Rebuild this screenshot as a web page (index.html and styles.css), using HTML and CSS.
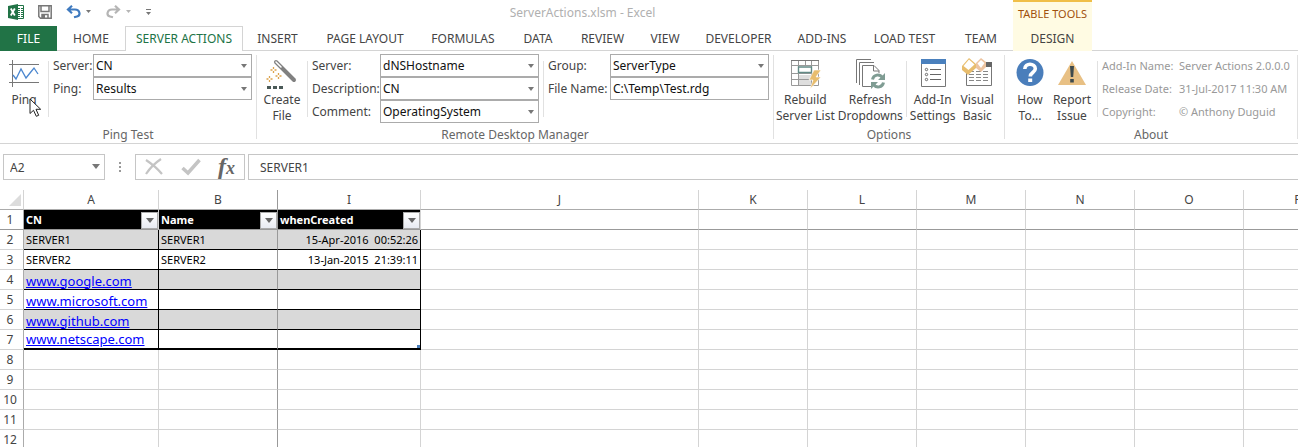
FILE: index.html
```html
<!DOCTYPE html>
<html lang="en">
<head>
<meta charset="utf-8">
<title>ServerActions.xlsm - Excel</title>
<link rel="stylesheet" href="styles.css">
</head>
<body>
<header class="titlebar">
  <div class="quick">
    <svg class="logo" width="17" height="16" viewBox="0 0 17 16" aria-hidden="true"><path fill="#fff" stroke="#217346" d="M9 1.500h6.500v13H9z"/><path stroke="#217346" d="M10 4.500h2m1 0h2M10 6.500h2m1 0h2M10 8.500h2m1 0h2M10 10.500h2m1 0h2M10 12.500h2m1 0h2"/><path fill="#217346" d="M0 2l10-2v16L0 14z"/><path stroke="#fff" stroke-width="1.800" d="M2.800 4.500l4 7M6.800 4.500l-4 7"/></svg>
    <button class="tool save" aria-label="Save"><svg width="14" height="14" viewBox="0 0 14 14"><path fill="none" stroke="#777" stroke-width="1.500" d="M.8.8h12.400v12.400H2.500L.8 11.500zM3 1v5.500h8V1M4 13V9.500h6V13"/><path fill="#777" d="M4 10h3v3H4z"/></svg></button>
    <button class="tool undo" aria-label="Undo"><svg width="26" height="14" viewBox="0 0 26 14"><path fill="none" stroke="#3f7abf" stroke-width="2.200" d="M6 .8L2 4.500l4 3.700M2 4.500h7c5 0 6 6 2 7l-3 .8"/><path fill="#777" d="M20 5h5l-2.500 3z"/></svg></button>
    <button class="tool redo" aria-label="Redo"><svg width="26" height="14" viewBox="0 0 26 14"><path fill="none" stroke="#b5b5b5" stroke-width="2.200" d="M9 .8l4 3.700-4 3.700M13 4.500H6c-5 0-6 6-2 7l3 .8"/><path fill="#b5b5b5" d="M20 5h5l-2.500 3z"/></svg></button>
    <button class="tool" aria-label="Customize toolbar"><svg width="6" height="8" viewBox="0 0 6 8"><path fill="#777" d="M0 1h5v1H0zM0 4h5L2.500 7z"/></svg></button>
  </div>
  <h1 class="title">ServerActions.xlsm - Excel</h1>
  <div class="context">TABLE TOOLS</div>
</header>

<nav class="tabs">
  <button class="tab file">FILE</button>
  <button class="tab">HOME</button>
  <button class="tab active">SERVER ACTIONS</button>
  <button class="tab">INSERT</button>
  <button class="tab">PAGE LAYOUT</button>
  <button class="tab">FORMULAS</button>
  <button class="tab">DATA</button>
  <button class="tab">REVIEW</button>
  <button class="tab">VIEW</button>
  <button class="tab">DEVELOPER</button>
  <button class="tab">ADD-INS</button>
  <button class="tab">LOAD TEST</button>
  <button class="tab">TEAM</button>
  <button class="tab design">DESIGN</button>
</nav>

<main>
<section class="ribbon">
  <div class="group ping">
    <div class="items">
      <button class="big ping-button">
        <svg width="32" height="32" viewBox="0 0 32 32"><path fill="none" stroke="#777" d="M1 6.500h30M1 24.500h30M4.500 2v27"/><path fill="none" stroke="#4a86cf" stroke-width="1.300" d="M5 17l3 4 5-10 5 9 4-5 4-5 4 6"/></svg>
        <span>Ping</span>
        <svg class="cursor" width="13" height="20" viewBox="0 0 13 20"><path fill="#fff" stroke="#222" d="M1 1v14.500l3.500-3.200 2.800 6 2.400-1-2.700-6h4.700z"/></svg>
      </button>
      <div class="rule"></div>
      <div class="fields">
        <label for="s1">Server:</label><span class="combo"><select id="s1"><option>CN</option></select></span>
        <label for="p1">Ping:</label><span class="combo"><select id="p1"><option>Results</option></select></span>
      </div>
    </div>
    <div class="caption">Ping Test</div>
  </div>

  <div class="group remote">
    <div class="items">
      <button class="big">
        <svg width="32" height="32" viewBox="0 0 32 32"><path stroke="#808080" stroke-width="4" stroke-linecap="round" d="M10 4l18 18"/><path stroke="#fff" stroke-width="1.500" stroke-linecap="round" d="M10 4l5 5"/><path fill="none" stroke="#dca24c" stroke-width="1.300" d="M7.500 9v2m0 2v2M4.500 12h2m2 0h2M12.500 15v2m0 2v2M9.500 18h2m2 0h2M3.500 18v2m0 2v2M.5 21h2m2 0h2"/><path fill="#4a5a58" d="M1 28h4v3H1zM7 28h4v3H7zM13 28h4v3h-4z"/></svg>
        <span>Create<br>File</span>
      </button>
      <div class="rule"></div>
      <div class="fields">
        <label for="s2">Server:</label><span class="combo"><select id="s2"><option>dNSHostname</option></select></span>
        <label for="d2">Description:</label><span class="combo"><select id="d2"><option>CN</option></select></span>
        <label for="c2">Comment:</label><span class="combo"><select id="c2"><option>OperatingSystem</option></select></span>
      </div>
      <div class="rule"></div>
      <div class="fields target">
        <label for="g2">Group:</label><span class="combo"><select id="g2"><option>ServerType</option></select></span>
        <label for="f2">File Name:</label><input id="f2" type="text" value="C:\Temp\Test.rdg">
      </div>
    </div>
    <div class="caption">Remote Desktop Manager</div>
  </div>

  <div class="group options">
    <div class="items">
      <button class="big">
        <svg width="32" height="32" viewBox="0 0 32 32"><path fill="#dedede" d="M9 17h14v10H9z"/><path fill="none" stroke="#999" d="M2.500 2.500h27v25h-27zM2 7.500h27M2 15.500h27M2 21.500h27M9.500 2v25M16.500 2v5m6-5v25"/><path fill="#fff" stroke="#638b86" stroke-width="1.400" d="M9.500 9h13v5.500h-13z"/><path stroke="#777" d="M2 2.500h28"/><path fill="#e8bd6d" stroke="#fff" stroke-width=".6" d="M25 12h7l-5 7h5L21 31l3-9h-4z"/></svg>
        <span>Rebuild<br>Server List</span>
      </button>
      <button class="big">
        <svg width="32" height="32" viewBox="0 0 32 32"><path fill="none" stroke="#777" d="M17 1.500H2.500V25M20 4.500H5.500V27"/><path fill="#fff" stroke="#777" d="M8.500 7.500H20l5 5v16H8.500zM19.500 8v5H25"/><circle cx="24" cy="23" r="8" fill="#fff"/><path fill="none" stroke="#7f9c93" stroke-width="3" d="M18.500 21.500c1-5 7-6 10-2M29.500 24.500c-1 5-7 6-10 2"/><path fill="#7f9c93" d="M31 15v7h-7zM17 31v-7h7z"/></svg>
        <span>Refresh<br>Dropdowns</span>
      </button>
      <div class="rule"></div>
      <button class="big">
        <svg width="32" height="32" viewBox="0 0 32 32"><path fill="#fff" stroke="#777" d="M4.500 2.500h24v26h-24z"/><path fill="#4a80bd" d="M4 1h25v5H4z"/><path stroke="#666" d="M13 11.500h11M13 16.500h11M13 21.500h11"/><g fill="none" stroke="#666"><circle cx="9.500" cy="11.500" r="1.200"/><circle cx="9.500" cy="16.500" r="1.200"/><circle cx="9.500" cy="21.500" r="1.200"/></g></svg>
        <span>Add-In<br>Settings</span>
      </button>
      <button class="big">
        <svg width="32" height="32" viewBox="0 0 32 32"><path fill="#fff" stroke="#777" d="M5.500 8.500h25v19h-25z"/><path fill="#666" d="M24 4h7v5h-7z"/><path stroke="#888" stroke-dasharray="5 2" d="M8 13.500h21M8 16.500h21M8 19.500h21M8 22.500h21"/><path fill="#e8bd6d" d="M1 8l7-8 7 6v4l-8 7-6-5z"/><path fill="#fff" d="M2.500 8L8 1.500l5.500 5L7.500 12z"/><path fill="#edc4a0" d="M15 5l5-5 5 4v5l-5 5-5-4z"/><path fill="#fff" d="M16.500 5.500L20 2l3.500 3-3.500 5z"/></svg>
        <span>Visual<br>Basic</span>
      </button>
    </div>
    <div class="caption">Options</div>
  </div>

  <div class="group about">
    <div class="items">
      <button class="big">
        <svg width="32" height="32" viewBox="0 0 32 32"><circle cx="16" cy="14.500" r="13.500" fill="#4a7ebb"/><path fill="none" stroke="#fff" stroke-width="3.600" d="M10.800 11c0-6.500 10.500-6 10.500-.3 0 3.800-5 3.800-5 7.800"/><path fill="#fff" d="M14.200 20.500h4v3.500h-4z"/></svg>
        <span>How<br>To...</span>
      </button>
      <button class="big">
        <svg width="32" height="32" viewBox="0 0 32 32"><path fill="#e8c084" d="M16 3l14 24H2z"/><path fill="#3e4a4d" d="M14 8h4l-.8 11h-2.400zM14.200 21h3.600v3.500h-3.600z"/></svg>
        <span>Report<br>Issue</span>
      </button>
      <div class="rule"></div>
      <dl class="facts">
        <dt>Add-In Name:</dt><dd>Server Actions 2.0.0.0</dd>
        <dt>Release Date:</dt><dd>31-Jul-2017 11:30 AM</dd>
        <dt>Copyright:</dt><dd>© Anthony Duguid</dd>
      </dl>
    </div>
    <div class="caption">About</div>
  </div>
</section>

<section class="formula-bar">
  <span class="combo namebox"><select aria-label="Name box"><option>A2</option></select></span>
  <svg class="grip" width="3" height="11" viewBox="0 0 3 11"><path fill="#999" d="M0 0h2v2H0zM0 4h2v2H0zM0 8h2v2H0z"/></svg>
  <div class="entry-tools">
    <button class="tool" aria-label="Cancel"><svg width="18" height="18" viewBox="0 0 18 18"><path fill="none" stroke="#c4c4c4" stroke-width="2.200" d="M1 2c6 4 11 8 16 14M16 1C10 5 5 10 1 16"/></svg></button>
    <button class="tool" aria-label="Enter"><svg width="20" height="18" viewBox="0 0 20 18"><path fill="none" stroke="#c4c4c4" stroke-width="3.500" d="M1.500 10l5.500 5L18.500 2"/></svg></button>
    <button class="tool fx" aria-label="Insert function">f<small>x</small></button>
  </div>
  <input class="formula" type="text" aria-label="Formula" value="SERVER1">
</section>

<table class="sheet">
  <colgroup><col class="c-num"><col class="c-a"><col class="c-b"><col class="c-i"><col class="c-j"><col class="c-std" span="6"></colgroup>
  <thead>
    <tr><th class="corner"><svg width="12" height="12" viewBox="0 0 12 12"><path fill="#dcdcdc" d="M12 0v12H0z"/></svg></th><th>A</th><th class="freeze">B</th><th>I</th><th>J</th><th>K</th><th>L</th><th>M</th><th>N</th><th>O</th><th>P</th></tr>
  </thead>
  <tbody>
    <tr class="names"><th>1</th>
      <td><div>CN<button class="filter" aria-label="Filter CN"></button></div></td>
      <td class="freeze"><div>Name<button class="filter" aria-label="Filter Name"></button></div></td>
      <td><div>whenCreated<button class="filter" aria-label="Filter whenCreated"></button></div></td>
      <td><td><td><td><td><td><td></tr>
    <tr class="data band"><th>2</th><td>SERVER1</td><td class="freeze">SERVER1</td><td class="date">15-Apr-2016&nbsp; 00:52:26</td><td><td><td><td><td><td><td></tr>
    <tr class="data"><th>3</th><td>SERVER2</td><td class="freeze">SERVER2</td><td class="date">13-Jan-2015&nbsp; 21:39:11</td><td><td><td><td><td><td><td></tr>
    <tr class="data band"><th>4</th><td><a href="#google">www.google.com</a></td><td class="freeze"></td><td><td><td><td><td><td><td><td></tr>
    <tr class="data"><th>5</th><td><a href="#microsoft">www.microsoft.com</a></td><td class="freeze"></td><td><td><td><td><td><td><td><td></tr>
    <tr class="data band"><th>6</th><td><a href="#github">www.github.com</a></td><td class="freeze"></td><td><td><td><td><td><td><td><td></tr>
    <tr class="data last"><th>7</th><td><a href="#netscape">www.netscape.com</a></td><td class="freeze"></td><td class="end"><td><td><td><td><td><td><td></tr>
    <tr><th>8</th><td><td class="freeze"><td><td><td><td><td><td><td><td></tr>
    <tr><th>9</th><td><td class="freeze"><td><td><td><td><td><td><td><td></tr>
    <tr><th>10</th><td><td class="freeze"><td><td><td><td><td><td><td><td></tr>
    <tr><th>11</th><td><td class="freeze"><td><td><td><td><td><td><td><td></tr>
    <tr><th>12</th><td><td class="freeze"><td><td><td><td><td><td><td><td></tr>
  </tbody>
</table>
</main>
</body>
</html>
```
FILE: styles.css
```css
* { box-sizing: border-box; }
body {
  margin: 0;
  height: 100vh;
  overflow: hidden;
  background: #fff;
  color: #444;
  font: 12px/16px "Noto Sans", "Open Sans", sans-serif;
}
button, select, input { font: inherit; color: inherit; margin: 0; border-radius: 0; }
button { padding: 0; border: 0; background: none; white-space: nowrap; }
svg { display: block; flex: none; }

/* Title bar */
.titlebar { display: flex; height: 26px; }
.quick { flex: 0 0 152px; display: flex; align-items: center; padding: 0 0 2px 8px; }
.save { margin: 0 14px 0 13px; }
.undo { margin-right: 14px; }
.redo { margin-right: 14px; }
.title { flex: 0 0 861px; margin: 0; font-size: 12px; font-weight: 400; line-height: 26px; text-align: center; color: #b0b0b0; }
.context { flex: 0 0 79px; border-top: 2px solid #f0bf48; background: #fffbe3; color: #a0500c; font-size: 11px; line-height: 23px; text-align: center; }

/* Ribbon tabs */
.tabs {
  display: grid;
  grid-template-columns: 57px 68px 118px 69px 106px 90px 60px 69px 56px 91px 76px 89px 64px 79px;
  height: 25px;
  border-bottom: 1px solid #d4d4d4;
}
.tab { line-height: 24px; }
.file { background: #217346; color: #fff; height: 25px; }
.active { height: 25px; border: 1px solid #d4d4d4; border-bottom: 0; background: #fff; color: #217346; }
.design { background: #fffbe3; }

/* Ribbon */
.ribbon { display: flex; height: 93px; border-bottom: 1px solid #d4d4d4; }
.group { flex: none; display: flex; flex-direction: column; margin: 4px 0; border-right: 1px solid #e1e1e1; }
.ping { width: 257px; }
.remote { width: 517px; }
.options { width: 231px; }
.about { flex: 1 0 293px; }
.items { display: flex; flex: none; height: 70px; }
.caption { line-height: 20px; text-align: center; color: #666; }
.rule { flex: none; width: 1px; height: 56px; margin-top: 6px; background: #e1e1e1; }
.big { display: flex; flex: 1 0 auto; flex-direction: column; align-items: center; padding-top: 3px; line-height: 16px; }
.big span { margin-top: 2px; }
.ping-button { position: relative; }
.cursor { position: absolute; left: 29px; top: 43px; }
.options .items { gap: 3px; padding: 0 8px 0 2px; }
.options .big { flex: none; }
.options .big:last-child { flex: 1; }
.about .items { padding-left: 4px; }
.about .big { flex: 0 0 42px; }
.about .rule { margin-left: 4px; }
.fields { display: grid; grid-template-columns: 40px 159px; grid-auto-rows: 23px; margin: -1px 4px 0 4px; align-items: center; }
.remote .fields { grid-template-columns: 68px 159px; }
.remote .target { grid-template-columns: 62px 159px; }
.combo { position: relative; display: block; height: 23px; }
.combo::after { content: ""; position: absolute; right: 5px; top: 10px; border: 3px solid transparent; border-top: 4px solid #777; border-bottom: 0; pointer-events: none; }
.combo select, .fields input { appearance: none; display: block; width: 100%; height: 23px; padding: 0 2px; border: 1px solid #ababab; background: #fff; color: #111; }
.facts { display: grid; grid-template-columns: 77px 1fr; grid-auto-rows: 23px; margin: -1px 0 0 4px; font-size: 11px; line-height: 23px; color: #999; white-space: nowrap; }
.facts dd { margin: 0; }

/* Formula bar */
.formula-bar { display: flex; height: 46px; padding: 10px 0 10px 3px; }
.combo.namebox { width: 102px; height: 26px; }
.namebox::after { border-width: 5px 4px 0; }
.combo.namebox select { height: 26px; padding: 1px 6px 0; border-color: #c6c6c6; color: #444; }
.grip { margin: 8px 13px 0 14px; }
.entry-tools { display: flex; justify-content: space-between; align-items: center; width: 110px; padding: 0 9px; border: 1px solid #c6c6c6; }
.fx { color: #666; font: italic bold 24px/20px "Liberation Serif", serif; }
.fx small { font-size: 18px; }
.formula { flex: 1; margin-left: 3px; padding: 1px 11px 0; border: 1px solid #c6c6c6; border-right: 0; }

/* Sheet */
.sheet { table-layout: fixed; width: 1353px; border-spacing: 0; }
.c-num { width: 24px; }
.c-a { width: 135px; }
.c-b { width: 119px; }
.c-i { width: 143px; }
.c-j { width: 278px; }
.c-std { width: 109px; }
.sheet th, .sheet td { height: 20px; padding: 0; border: 0 solid #d4d4d4; border-width: 0 1px 1px 0; line-height: 18px; white-space: nowrap; }
.sheet th { font-weight: 400; }
.sheet thead th { border-bottom-color: #ababab; }
.sheet .corner svg { margin-left: 9px; }
.sheet tbody th { padding-right: 3px; border-right-color: #ababab; }
.sheet td { padding: 1px 2px 0; font-size: 11px; color: #000; }
.sheet .names > * { border-bottom-color: #999; }
.sheet .names td:nth-child(-n+4) { background: #000; color: #fff; font-weight: 700; }
.names div { display: flex; align-items: center; justify-content: space-between; height: 18px; margin-right: -2px; }
.filter { width: 17px; height: 17px; border: 1px solid #ababab; background: linear-gradient(#fff, #e8ebf2); display: grid; place-items: center; }
.filter::after { content: ""; border: 4px solid transparent; border-top: 5px solid #666; border-bottom: 0; }
.sheet .data td:nth-child(-n+4) { border-color: #000; }
.band td:nth-child(-n+4) { background: #d9d9d9; }
.sheet .last td:nth-child(-n+4) { border-bottom-width: 2px; line-height: 17px; }
.sheet .end { background: linear-gradient(#4a7ebb, #4a7ebb) right bottom / 3px 3px no-repeat; }
.sheet .date { text-align: right; }
.sheet thead .freeze, .sheet tbody tr .freeze, .sheet .data td.freeze:nth-child(3) { border-right-color: #999; }
.sheet a { display: block; height: 17px; color: #00f; font-size: 13px; }
```
